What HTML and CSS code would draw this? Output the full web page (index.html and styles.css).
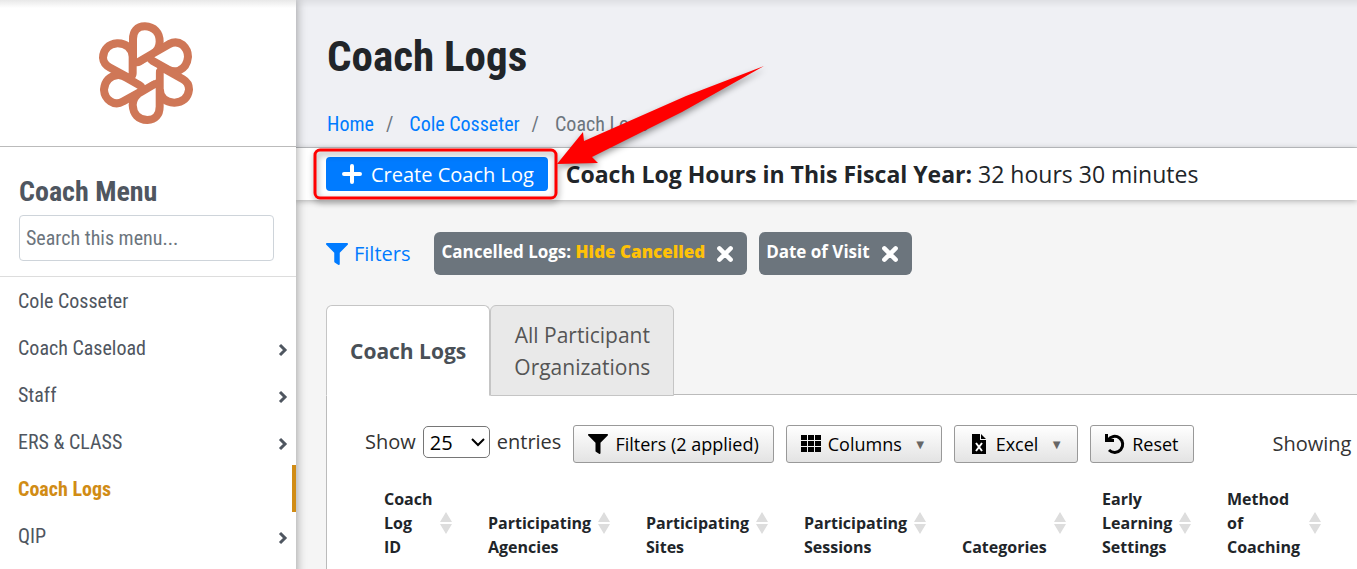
FILE: index.html
```html
<!DOCTYPE html>
<html lang="en">
<head>
    <meta charset="UTF-8">
    <meta name="viewport" content="width=device-width, initial-scale=1.0">
    <title>Coach Logs</title>
    <link rel="stylesheet" href="styles.css">
</head>
<body>

    <!-- Shared icons -->
    <svg class="sprite" aria-hidden="true">
        <symbol id="icon-filter" viewBox="0 0 512 512"><path d="M488 0H24C3 0-8 26 7 41l185 185v206c0 8 4 15 10 20l80 56c16 11 38 0 38-20V226L505 41c15-15 4-41-17-41z"/></symbol>
        <symbol id="icon-chevron" viewBox="0 0 10 14"><path d="M2 2l5 5-5 5" fill="none" stroke="currentColor" stroke-width="3"/></symbol>
        <symbol id="icon-close" viewBox="0 0 16 16"><path d="M3 3l10 10M13 3L3 13" fill="none" stroke="currentColor" stroke-width="4" stroke-linecap="round"/></symbol>
        <symbol id="icon-sort" viewBox="0 0 12 22"><path d="M6 0l6 10H0zM6 22l6-10H0z"/></symbol>
    </svg>

    <div class="page">
        <aside class="sidebar">
            <a class="logo" href="#" aria-label="Home">
                <svg viewBox="0 0 330 345" width="110" height="115">
                    <g class="logo-outline">
                        <path d="M141 130V72Q141 46 164 46Q197 48 197 80Q197 96 183 105Z"/>
                        <path d="M193 127L243 98Q258 90 270 99Q282 110 282 125Q280 148 262 156Q250 159 240 153Z"/>
                        <path d="M221 174L273 203Q285 210 285 223Q282 250 253 251Q222 250 221 220Z"/>
                        <path d="M197 219L155 244Q141 253 140 270Q142 302 172 303Q197 302 197 275Z"/>
                        <path d="M143 221L93 249Q80 257 68 249Q55 240 54 224Q57 195 85 192Q95 193 102 198Z"/>
                        <path d="M116 175V125Q113 98 83 97Q52 100 51 128Q52 140 65 147Z"/>
                    </g>
                    <g class="logo-holes">
                        <path d="M141 130V72Q141 46 164 46Q197 48 197 80Q197 96 183 105Z"/>
                        <path d="M193 127L243 98Q258 90 270 99Q282 110 282 125Q280 148 262 156Q250 159 240 153Z"/>
                        <path d="M221 174L273 203Q285 210 285 223Q282 250 253 251Q222 250 221 220Z"/>
                        <path d="M197 219L155 244Q141 253 140 270Q142 302 172 303Q197 302 197 275Z"/>
                        <path d="M143 221L93 249Q80 257 68 249Q55 240 54 224Q57 195 85 192Q95 193 102 198Z"/>
                        <path d="M116 175V125Q113 98 83 97Q52 100 51 128Q52 140 65 147Z"/>
                        <path d="M168 143L197 160V191L168 206L141 191V160Z"/>
                    </g>
                </svg>
            </a>
            <div class="menu-head">
                <h2>Coach Menu</h2>
                <input type="search" class="menu-search" aria-label="Search this menu" placeholder="Search this menu...">
            </div>
            <nav class="menu">
                <a href="#">Cole Cosseter</a>
                <a href="#">Coach Caseload <svg class="chevron"><use href="#icon-chevron"/></svg></a>
                <a href="#">Staff <svg class="chevron"><use href="#icon-chevron"/></svg></a>
                <a href="#">ERS &amp; CLASS <svg class="chevron"><use href="#icon-chevron"/></svg></a>
                <a href="#" class="active">Coach Logs</a>
                <a href="#">QIP <svg class="chevron"><use href="#icon-chevron"/></svg></a>
            </nav>
        </aside>

        <main class="main">
            <header class="page-head">
                <h1>Coach Logs</h1>
                <nav class="breadcrumb" aria-label="Breadcrumb">
                    <a href="#">Home</a>
                    <span>/</span>
                    <a href="#">Cole Cosseter</a>
                    <span>/</span>
                    <span>Coach Logs</span>
                </nav>
            </header>

            <div class="action-bar">
                <button type="button" class="create-btn">
                    <svg viewBox="0 0 20 20" width="20" height="20"><path d="M10 2v16M2 10h16" stroke="#fff" stroke-width="4" stroke-linecap="round"/></svg>
                    Create Coach Log
                </button>
                <p><strong>Coach Log Hours in This Fiscal Year:</strong> 32 hours 30 minutes</p>
            </div>

            <div class="content">
                <!-- Applied filters -->
                <div class="filters">
                    <a href="#" class="filters-link"><svg class="filter-icon"><use href="#icon-filter"/></svg>Filters</a>
                    <span class="chip">
                        <span>Cancelled Logs: <b>Hide Cancelled</b></span>
                        <button type="button" aria-label="Remove Cancelled Logs filter"><svg><use href="#icon-close"/></svg></button>
                    </span>
                    <span class="chip">
                        <span>Date of Visit</span>
                        <button type="button" aria-label="Remove Date of Visit filter"><svg><use href="#icon-close"/></svg></button>
                    </span>
                </div>

                <div class="tabs" role="tablist">
                    <button type="button" class="tab selected" role="tab" aria-selected="true">Coach Logs</button>
                    <button type="button" class="tab" role="tab" aria-selected="false">All Participant<br>Organizations</button>
                </div>

                <section class="panel">
                    <!-- Table tools -->
                    <div class="toolbar">
                        <label class="length">Show
                            <span class="select-wrap">
                                <select>
                                    <option>10</option>
                                    <option selected>25</option>
                                    <option>50</option>
                                </select>
                                <svg viewBox="0 0 14 10"><path d="M1 2l6 6 6-6" fill="none" stroke="#000" stroke-width="2"/></svg>
                            </span>
                            entries
                        </label>
                        <button type="button" class="tool"><svg class="tool-icon"><use href="#icon-filter"/></svg>Filters (2 applied)</button>
                        <button type="button" class="tool">
                            <svg class="tool-icon" viewBox="0 0 20 20"><path d="M0 1h6v5H0zM7 1h6v5H7zM14 1h6v5h-6zM0 7h6v5H0zM7 7h6v5H7zM14 7h6v5h-6zM0 13h6v5H0zM7 13h6v5H7zM14 13h6v5h-6z"/></svg>
                            Columns <span class="caret">▼</span>
                        </button>
                        <button type="button" class="tool">
                            <svg class="tool-icon" viewBox="0 0 20 20"><path d="M3 0h8v6h6v14H3zM12 0l5 5h-5z"/><path d="M7 9l6 8M13 9l-6 8" stroke="#fff" stroke-width="2"/></svg>
                            Excel <span class="caret">▼</span>
                        </button>
                        <button type="button" class="tool">
                            <svg class="tool-icon" viewBox="0 0 20 20"><path d="M3 6a8 8 0 1 1 1 10" fill="none" stroke="#000" stroke-width="3"/><path d="M0 0h3v5h6v3H0z"/></svg>
                            Reset
                        </button>
                        <span class="showing">Showing</span>
                    </div>

                    <table class="logs">
                        <thead>
                            <tr>
                                <th class="col-id"><div><span>Coach<br>Log<br>ID</span><svg><use href="#icon-sort"/></svg></div></th>
                                <th class="col-wide"><div><span>Participating<br>Agencies</span><svg><use href="#icon-sort"/></svg></div></th>
                                <th class="col-wide"><div><span>Participating<br>Sites</span><svg><use href="#icon-sort"/></svg></div></th>
                                <th class="col-wide"><div><span>Participating<br>Sessions</span><svg><use href="#icon-sort"/></svg></div></th>
                                <th class="col-category"><div><span>Categories</span><svg><use href="#icon-sort"/></svg></div></th>
                                <th class="col-setting"><div><span>Early<br>Learning<br>Settings</span><svg><use href="#icon-sort"/></svg></div></th>
                                <th class="col-method"><div><span>Method<br>of<br>Coaching</span><svg><use href="#icon-sort"/></svg></div></th>
                            </tr>
                        </thead>
                    </table>
                </section>
            </div>
        </main>
    </div>

    <!-- Callout over the create button -->
    <svg class="callout" width="480" height="160" viewBox="300 55 480 160" aria-hidden="true">
        <rect x="315" y="150" width="241" height="48" rx="5" fill="none" stroke="#f00" stroke-width="3"/>
        <path d="M764 66L686 96L584 141L583 132L557 164L598 163L592 157L682 112Z" fill="#f00"/>
    </svg>

</body>
</html>
```
FILE: styles.css
```css
* {
    box-sizing: border-box;
}
body {
    margin: 0;
    background: #f5f5f5;
    color: #212529;
    font-family: "Open Sans", "Noto Sans", sans-serif;
    font-size: 20px;
    line-height: 32px;
    overflow: hidden;
}
h1, h2, p {
    margin: 0;
}
a {
    color: #007bff;
    text-decoration: none;
}
button, input, select {
    font-family: inherit;
}
.sprite {
    position: absolute;
    width: 0;
    height: 0;
}
.page {
    display: flex;
    min-height: 100vh;
}

/* Sidebar */
.sidebar {
    position: relative;
    flex: 0 0 296px;
    background: #fff;
    box-shadow: 0 0 10px rgba(0, 0, 0, 0.4);
    color: #4f5660;
    font-family: "Roboto Condensed", "Liberation Sans Narrow", Roboto, sans-serif;
}
.logo {
    display: flex;
    justify-content: center;
    padding: 15px 6px 16px 0;
    border-bottom: 1px solid #bbb;
    background: linear-gradient(#e8e8e8, #fff 8px);
}
.logo-outline {
    fill: #cf7757;
    stroke: #cf7757;
    stroke-width: 48;
    stroke-linejoin: round;
}
.logo-holes {
    fill: #fff;
}
.menu-head {
    padding: 29px 22px 15px 19px;
    border-bottom: 1px solid #ddd;
}
.menu-head h2 {
    font-size: 28px;
    line-height: 32px;
    margin-bottom: 7px;
}
.menu-search {
    display: block;
    width: 100%;
    height: 46px;
    padding: 0 6px;
    border: 1px solid #ced4da;
    border-radius: 4px;
    font-size: 20px;
}
.menu-search::placeholder {
    color: #6c757d;
}
.menu a {
    display: flex;
    align-items: center;
    justify-content: space-between;
    height: 47px;
    padding: 0 8px 0 18px;
    color: inherit;
}
.menu .active {
    border-right: 4px solid #d18c15;
    color: #d18c15;
    font-weight: bold;
}
.chevron {
    width: 10px;
    height: 14px;
    margin-top: 5px;
}

/* Page header */
.main {
    flex: 1;
    min-width: 0;
}
.page-head {
    padding: 32px 31px 7px;
    border-bottom: 1px solid #c5c7ca;
    background: linear-gradient(#dfe0e4, #eff0f4 8px);
    font-family: "Roboto Condensed", "Liberation Sans Narrow", Roboto, sans-serif;
}
.page-head h1 {
    font-size: 43px;
    line-height: 48px;
}
.breadcrumb {
    display: flex;
    gap: 12px;
    margin-top: 28px;
    color: #6c757d;
}
.breadcrumb a + span {
    margin-right: 4px;
}
.action-bar {
    display: flex;
    align-items: center;
    gap: 18px;
    padding: 9px 30px;
    background: #fff;
    box-shadow: 0 1px 6px rgba(0, 0, 0, 0.3);
}
.action-bar p {
    font-size: 23px;
    line-height: 34px;
    white-space: nowrap;
}
.create-btn {
    display: flex;
    align-items: center;
    gap: 9px;
    height: 34px;
    padding: 0 14px 0 16px;
    border: 0;
    border-radius: 4px;
    background: #007bff;
    color: #fff;
    font-size: 20px;
    white-space: nowrap;
}

/* Filters */
.content {
    padding: 32px 0 0 30px;
}
.filters {
    display: flex;
    gap: 12px;
    margin-bottom: 30px;
}
.filters-link {
    display: flex;
    align-items: center;
    gap: 6px;
    margin-right: 12px;
}
.filter-icon {
    width: 22px;
    height: 22px;
    fill: #007bff;
}
.chip {
    display: flex;
    align-items: center;
    gap: 11px;
    height: 43px;
    padding: 0 13px 4px 7px;
    border-radius: 6px;
    background: #6c757d;
    color: #fff;
    font-size: 17px;
    font-weight: bold;
    white-space: nowrap;
}
.chip b {
    color: #ffc107;
    font-weight: 800;
}
.chip button {
    display: flex;
    margin-top: 4px;
    padding: 0;
    border: 0;
    background: none;
    color: #fff;
}
.chip svg {
    width: 18px;
    height: 18px;
}

/* Tabs */
.tabs {
    display: flex;
    position: relative;
}
.tab {
    height: 91px;
    padding: 0 23px;
    border: 1px solid #c5c5c5;
    border-radius: 6px 6px 0 0;
    background: #e9e9e9;
    color: #555;
    font-size: 21px;
    line-height: 32px;
}
.tab.selected {
    border-bottom-color: #fff;
    background: #fff;
    color: #495057;
    font-weight: bold;
}
.panel {
    min-height: 200px;
    margin-top: -2px;
    padding: 30px 0 0 38px;
    border: 1px solid #bbb;
    border-width: 1px 0 0 1px;
    background: #fff;
    overflow: hidden;
}

/* Toolbar */
.toolbar {
    display: flex;
    align-items: center;
    gap: 12px;
    white-space: nowrap;
    color: #333;
}
.length {
    display: flex;
    align-items: center;
    gap: 7px;
    padding-bottom: 4px;
}
.select-wrap {
    display: flex;
    position: relative;
}
.select-wrap svg {
    position: absolute;
    top: 11px;
    right: 5px;
    width: 14px;
    height: 10px;
    pointer-events: none;
}
.length select {
    width: 67px;
    height: 32px;
    padding: 0 6px;
    border: 1px solid #767676;
    border-radius: 5px;
    appearance: none;
    background: #fff;
    font-size: 20px;
}
.tool {
    display: flex;
    align-items: center;
    gap: 7px;
    height: 38px;
    padding: 0 14px;
    border: 1px solid #999;
    border-radius: 3px;
    background: linear-gradient(#fff, #e3e3e3);
    color: #000;
    font-size: 18px;
}
.tool-icon {
    width: 20px;
    height: 20px;
}
.caret {
    margin-left: 5px;
    color: #666;
    font-size: 13px;
}
.showing {
    margin-left: 67px;
}

/* Table */
.logs {
    width: 1000px;
    margin: 24px 0 0 19px;
    border-collapse: collapse;
    table-layout: fixed;
    font-size: 16px;
    line-height: 24px;
}
.logs th {
    padding: 0;
    text-align: left;
}
.logs th div {
    display: flex;
    align-items: center;
    justify-content: space-between;
    height: 72px;
    padding-right: 36px;
}
.logs th span {
    align-self: flex-end;
}
.logs svg {
    width: 12px;
    height: 22px;
    fill: #ddd;
}
.col-id {
    width: 104px;
}
.col-wide {
    width: 158px;
}
.col-category {
    width: 140px;
}
.col-setting {
    width: 125px;
}
.logs .col-method div {
    width: 130px;
}

.callout {
    position: absolute;
    top: 55px;
    left: 300px;
    filter: drop-shadow(1px 3px 3px rgba(0, 0, 0, 0.4));
    pointer-events: none;
}
```
